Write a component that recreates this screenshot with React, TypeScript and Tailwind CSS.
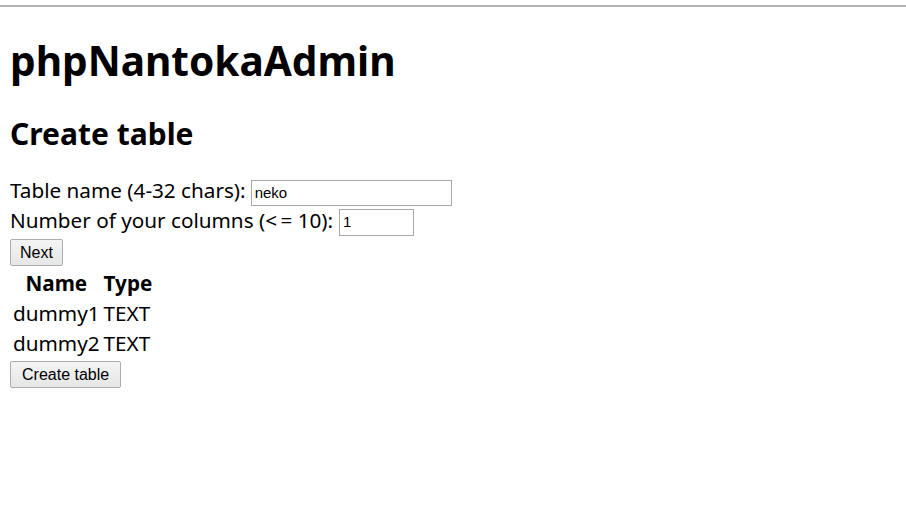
export default function App() {
  return (
    <div className="min-h-screen bg-white text-black font-['Noto_Sans',sans-serif]">
      <div className="pt-[5px]">
        <div className="h-[2px] bg-[#b4b4b4]" />
      </div>
      <div className="px-[10px]">
        <h1 className="mt-[26px] text-[40.6px] font-bold leading-[56px]">phpNantokaAdmin</h1>
        <h2 className="mt-[24px] text-[30px] font-bold leading-[42px]">Create table</h2>
        <form className="mt-[20px] text-[20.7px] leading-[30px]" onSubmit={(e) => e.preventDefault()}>
          <div className="flex items-center h-[30px]">
            <span>Table name (4-32 chars):</span>
            <input
              defaultValue="neko"
              className="ml-[5px] mt-[6px] w-[201px] h-[26px] border border-[#a9a9a9] px-[3px] text-[15px] font-['Liberation_Sans',sans-serif] outline-none"
            />
          </div>
          <div className="flex items-center h-[30px]">
            <span>Number of your columns (&lt;{"\u2009"}= 10):</span>
            <input
              defaultValue="1"
              className="ml-[6px] mt-[4px] w-[75px] h-[27px] border border-[#a9a9a9] px-[3px] text-[15px] font-['Liberation_Sans',sans-serif] outline-none"
            />
          </div>
          <button className="block mt-[4px] h-[27px] px-[9px] rounded-[2px] border border-[#acacac] bg-gradient-to-b from-[#f4f4f4] to-[#e6e6e6] text-[16px] leading-none font-['Liberation_Sans',sans-serif]">
            Next
          </button>
          <table className="mt-[1px] border-separate border-spacing-[2px]">
            <thead>
              <tr>
                <th className="px-[1px] leading-[28px] font-bold">Name</th>
                <th className="px-[1px] leading-[28px] font-bold">Type</th>
              </tr>
            </thead>
            <tbody>
              <tr>
                <td className="px-[1px] leading-[28px]">dummy1</td>
                <td className="px-[1px] leading-[28px]">TEXT</td>
              </tr>
              <tr>
                <td className="px-[1px] leading-[28px]">dummy2</td>
                <td className="px-[1px] leading-[28px]">TEXT</td>
              </tr>
            </tbody>
          </table>
          <button className="block mt-[2px] h-[27px] px-[11px] rounded-[2px] border border-[#acacac] bg-gradient-to-b from-[#f4f4f4] to-[#e6e6e6] text-[16px] leading-none font-['Liberation_Sans',sans-serif]">
            Create table
          </button>
        </form>
      </div>
    </div>
  );
}
